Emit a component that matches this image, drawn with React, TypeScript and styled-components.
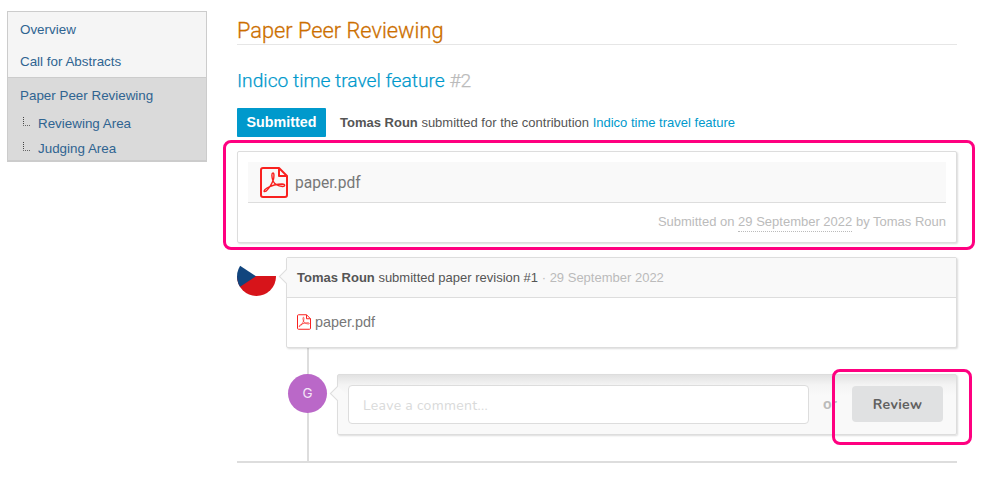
import React from 'react';
import styled, { createGlobalStyle } from 'styled-components';

const GlobalStyle = createGlobalStyle`
  * { box-sizing: border-box; }
  body {
    margin: 0;
    background: #fff;
    color: #555;
    font-family: "Liberation Sans", Arial, sans-serif;
    font-size: 13px;
    line-height: 16px;
  }
  a { color: #0099cc; text-decoration: none; }
`;

const Page = styled.div`
  position: relative;
  display: flex;
  align-items: flex-start;
  gap: 30px;
  width: 996px;
  height: 489px;
  padding: 11px 0 0 7px;
  overflow: hidden;
`;

const Sidebar = styled.nav`
  flex: none;
  width: 200px;
  height: 151px;
  background: #f5f5f5;
  border: 1px solid #ccc;
  border-bottom-width: 2px;
  font-size: 13.4px;
`;

const MenuLink = styled.a`
  display: block;
  height: 32px;
  padding: 2px 12px 0;
  line-height: 31px;
  && { color: #2f6491; }
`;

const ActiveSection = styled.div`
  height: 83px;
  margin-top: 1px;
  background: #dadada;
  border-top: 1px solid #ccc;
`;

const SubLink = styled.a`
  display: flex;
  align-items: center;
  gap: 8px;
  height: 25px;
  padding: 2px 0 0 15px;
  && { color: #2f6491; }
`;

const Branch = styled.span`
  width: 7px;
  height: 9px;
  margin-top: -5px;
  border-left: 1px dotted #444;
  border-bottom: 1px dotted #666;
`;

const Main = styled.main`
  flex: none;
  width: 720px;
`;

const Title = styled.h1`
  height: 34px;
  margin: 0;
  border-bottom: 1px solid #e6e6e6;
  color: #cc6f00;
  font: 300 21.8px/40px Roboto, sans-serif;
  -webkit-text-stroke: 0.3px currentColor;
`;

const PaperTitle = styled.h2`
  margin: 22px 0 0;
  height: 30px;
  color: #0099cc;
  font: 300 19.2px/27px Roboto, sans-serif;
  -webkit-text-stroke: 0.25px currentColor;
`;

const PaperNumber = styled.span`
  color: #bbb;
`;

const StatusRow = styled.div`
  display: flex;
  align-items: center;
  gap: 14px;
  height: 29px;
  margin-top: 11px;
`;

const StatusTag = styled.span`
  width: 89px;
  height: 29px;
  border-radius: 1px;
  background: #0099cc;
  color: #fff;
  text-align: center;
  font-size: 14.3px;
  font-weight: bold;
  line-height: 28px;
`;

const Card = styled.section`
  background: #fff;
  border: 1px solid #ddd;
  border-radius: 2px;
  box-shadow: 1px 1px 2px rgba(0, 0, 0, 0.14);
`;

const SubmissionCard = styled(Card)`
  height: 92px;
  margin-top: 14px;
  padding: 10px;
`;

const FileBar = styled.div`
  display: flex;
  align-items: center;
  gap: 7px;
  height: 41px;
  padding-left: 12px;
  background: #f9f9f9;
  border-bottom: 1px solid #ddd;
  color: #777;
  font: 400 15.6px/20px Roboto, sans-serif;
`;

const FileName = styled.span`
  padding-top: 1px;
`;

const SubmissionMeta = styled.div`
  margin-top: 11px;
  color: #bbb;
  text-align: right;
`;

const DateTip = styled.span`
  padding-bottom: 2px;
  border-bottom: 1px dotted #bbb;
`;

const TimelineItem = styled.div<{ $indent?: boolean }>`
  display: flex;
  align-items: flex-start;
  gap: 10px;
  padding-left: ${p => (p.$indent ? 51 : 0)}px;
`;

const Timeline = styled.div`
  margin-top: 14px;
  border-bottom: 2px solid #ddd;
  height: 206px;
`;

const Thread = styled.div`
  height: 113px;
  padding-top: 26px;
  background: linear-gradient(#ddd, #ddd) 70px 0 / 2px 100% no-repeat;
`;

const Flag = styled.svg`
  display: block;
  flex: none;
  width: 39px;
  height: 39px;
`;

const Initial = styled.div`
  flex: none;
  width: 39px;
  height: 39px;
  border-radius: 50%;
  background: #ba68c8;
  color: #f5e6f8;
  text-align: center;
  font: 400 13.5px/39px Inter, sans-serif;
`;

const BubbleCard = styled(Card)`
  position: relative;
  flex: 1;
  &::before {
    content: '';
    position: absolute;
    left: -6px;
    top: 13px;
    width: 10px;
    height: 10px;
    background: #f9f9f9;
    border-left: 1px solid #ddd;
    border-bottom: 1px solid #ddd;
    transform: rotate(45deg);
  }
`;

const RevisionCard = styled(BubbleCard)`
  height: 91px;
`;

const RevisionHeader = styled.header`
  position: relative;
  height: 40px;
  padding-left: 10px;
  background: #f9f9f9;
  border-bottom: 1px solid #ddd;
  line-height: 39px;
`;

const Muted = styled.span`
  color: #bbb;
`;

const RevisionFile = styled.div`
  display: flex;
  align-items: center;
  gap: 4px;
  height: 47px;
  padding-left: 10px;
  color: #777;
  font-size: 14.4px;
`;

const ReviewCard = styled(BubbleCard)`
  display: flex;
  align-items: flex-start;
  height: 61px;
  padding: 10px;
  background: linear-gradient(#e2e2e2, #f4f4f4 10px, #f9f9f9 20px);
`;

const CommentInput = styled.div`
  width: 461px;
  height: 39px;
  padding-left: 14px;
  border: 1px solid #ddd;
  border-radius: 4px;
  background: #fff;
  color: #d9dada;
  font: 400 14px/39px Nunito, Mulish, Lato, sans-serif;
  letter-spacing: 0.3px;
`;

const OrLabel = styled.span`
  width: 43px;
  padding-left: 14px;
  color: #bbb;
  font: 700 14px/38px "Liberation Sans", sans-serif;
`;

const ReviewButton = styled.button`
  width: 91px;
  height: 36px;
  margin-top: 1px;
  padding: 0;
  border: 0;
  border-radius: 4px;
  background: #e0e1e2;
  color: #606060;
  font: 700 14px/38px Nunito, Lato, sans-serif;
  letter-spacing: 0.35px;
`;

const Highlight = styled.div`
  position: absolute;
  z-index: 2;
  border: 3px solid #ff0080;
  border-radius: 8px;
  pointer-events: none;
`;

const FileHighlight = styled(Highlight)`
  left: 223px;
  top: 140px;
  width: 752px;
  height: 110px;
`;

const ReviewHighlight = styled(Highlight)`
  left: 832px;
  top: 369px;
  width: 140px;
  height: 76px;
`;

const PdfSvg = styled.svg`
  display: block;
  flex: none;
  fill: none;
  stroke: #f9211f;
  stroke-linejoin: round;
`;

function PdfIcon({ small = false }: { small?: boolean }) {
  return (
    <PdfSvg width={small ? 14 : 28} height={small ? 16 : 31} viewBox="0 0 28 31">
      <path strokeWidth="2" d="M3 1h16l8 8v19q0 2-2 2H3q-2 0-2-2V3q0-2 2-2z" />
      <path strokeWidth="2" d="M19 1v8h8" />
      <path
        strokeWidth="1.4"
        d="M13 14C11.500 9 11.500 6 13 6C14.300 6 14.100 10 13.300 13C11.500 17.500 9 21.500 6 24.200C3.500 25.500 3 23.500 7 21C11 18.800 17 17 22 17C25.500 17.200 25.500 19.700 22.500 19.500C18 19 14.500 17 13 14z"
      />
    </PdfSvg>
  );
}

function CzechAvatar() {
  return (
    <Flag viewBox="0 0 39 39">
      <defs>
        <clipPath id="avatar"><circle cx="19.500" cy="19.500" r="19.500" /></clipPath>
      </defs>
      <g clipPath="url(#avatar)">
        <path fill="#fff" d="M0 0h39v19H0z" />
        <path fill="#d7141a" d="M0 19h39v20H0z" />
        <path fill="#11457e" d="M-10 0L19 19.300L-10 38.300z" />
      </g>
    </Flag>
  );
}

export default function App() {
  return (
    <>
      <GlobalStyle />
      <Page>
        <Sidebar>
          <MenuLink href="#">Overview</MenuLink>
          <MenuLink href="#">Call for Abstracts</MenuLink>
          <ActiveSection>
            <MenuLink href="#">Paper Peer Reviewing</MenuLink>
            <SubLink href="#"><Branch />Reviewing Area</SubLink>
            <SubLink href="#"><Branch />Judging Area</SubLink>
          </ActiveSection>
        </Sidebar>
        <Main>
          <Title>Paper Peer Reviewing</Title>
          <PaperTitle>Indico time travel feature <PaperNumber>#2</PaperNumber></PaperTitle>
          <StatusRow>
            <StatusTag>Submitted</StatusTag>
            <span><b>Tomas Roun</b> submitted for the contribution <a href="#">Indico time travel feature</a></span>
          </StatusRow>
          <SubmissionCard>
            <FileBar><PdfIcon /><FileName>paper.pdf</FileName></FileBar>
            <SubmissionMeta>Submitted on <DateTip>29 September 2022</DateTip> by Tomas Roun</SubmissionMeta>
          </SubmissionCard>
          <Timeline>
            <TimelineItem>
              <CzechAvatar />
              <RevisionCard>
                <RevisionHeader>
                  <b>Tomas Roun</b> submitted paper revision #1 <Muted>· 29 September 2022</Muted>
                </RevisionHeader>
                <RevisionFile><PdfIcon small />paper.pdf</RevisionFile>
              </RevisionCard>
            </TimelineItem>
            <Thread>
              <TimelineItem $indent>
                <Initial>G</Initial>
                <ReviewCard>
                  <CommentInput>Leave a comment...</CommentInput>
                  <OrLabel>or</OrLabel>
                  <ReviewButton>Review</ReviewButton>
                </ReviewCard>
              </TimelineItem>
            </Thread>
          </Timeline>
        </Main>
        <FileHighlight />
        <ReviewHighlight />
      </Page>
    </>
  );
}
